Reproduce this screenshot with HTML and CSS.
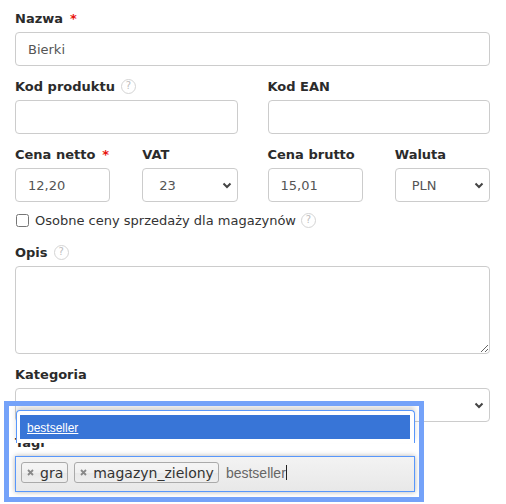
FILE: index.html
```html
<!DOCTYPE html>
<html lang="pl">
<head>
<meta charset="utf-8">
<title>Produkt</title>
<link rel="stylesheet" href="styles.css">
</head>
<body>
<form class="form">
  <div class="group">
    <label class="label">Nazwa<span class="req">*</span></label>
    <input class="input" type="text" value="Bierki">
  </div>

  <div class="row2">
    <div class="group">
      <label class="label">Kod produktu<span class="help">?</span></label>
      <input class="input" type="text">
    </div>
    <div class="group">
      <label class="label">Kod EAN</label>
      <input class="input" type="text">
    </div>
  </div>

  <div class="row2">
    <div class="row2 inner">
      <div class="group">
        <label class="label">Cena netto<span class="req">*</span></label>
        <input class="input" type="text" value="12,20">
      </div>
      <div class="group">
        <label class="label">VAT</label>
        <div class="select"><span>23</span><svg class="chev" width="10" height="7" viewBox="0 0 10 7"><path d="M1.5 1.5 L5 5 L8.5 1.5" fill="none" stroke="#444" stroke-width="2"/></svg></div>
      </div>
    </div>
    <div class="row2 inner">
      <div class="group">
        <label class="label">Cena brutto</label>
        <input class="input" type="text" value="15,01">
      </div>
      <div class="group">
        <label class="label">Waluta</label>
        <div class="select"><span>PLN</span><svg class="chev" width="10" height="7" viewBox="0 0 10 7"><path d="M1.5 1.5 L5 5 L8.5 1.5" fill="none" stroke="#444" stroke-width="2"/></svg></div>
      </div>
    </div>
  </div>

  <label class="check"><input type="checkbox" class="cb">Osobne ceny sprzedaży dla magazynów<span class="help">?</span></label>

  <div class="group">
    <label class="label">Opis<span class="help">?</span></label>
    <textarea class="textarea"></textarea>
  </div>

  <div class="group">
    <label class="label">Kategoria</label>
    <div class="select"><span></span><svg class="chev" width="10" height="7" viewBox="0 0 10 7"><path d="M1.5 1.5 L5 5 L8.5 1.5" fill="none" stroke="#444" stroke-width="2"/></svg></div>
  </div>

  <div class="group tags-group">
    <label class="label">Tagi</label>
    <div class="tags">
      <span class="chip"><svg class="x" width="7" height="7" viewBox="0 0 7 7"><path d="M1 1 L6 6 M6 1 L1 6" stroke="#888" stroke-width="1.8"/></svg>gra</span>
      <span class="chip"><svg class="x" width="7" height="7" viewBox="0 0 7 7"><path d="M1 1 L6 6 M6 1 L1 6" stroke="#888" stroke-width="1.8"/></svg>magazyn_zielony</span>
      <span class="typed">bestseller<span class="caret"></span></span>
    </div>
    <div class="dropdown">
      <div class="option"><span class="option-text">bestseller</span></div>
    </div>
    <div class="focus-frame"></div>
  </div>
</form>
</body>
</html>
```

FILE: styles.css
```css
* {
  box-sizing: border-box;
}

body {
  margin: 0;
  background: #fff;
  color: #333;
  font-family: "DejaVu Sans", Verdana, sans-serif;
}

.form {
  width: 475px;
  margin: 8px 0 0 15px;
}

.group {
  margin-bottom: 10px;
}

.label {
  display: flex;
  align-items: center;
  height: 20px;
  margin-bottom: 4px;
  font-size: 13px;
  font-weight: bold;
  color: #2b2b2b;
}

.req {
  color: #e8140e;
  margin-left: 7px;
}

.help {
  display: inline-flex;
  align-items: center;
  justify-content: center;
  width: 15px;
  height: 15px;
  margin-left: 6px;
  border: 1px solid #d4d4d4;
  border-radius: 50%;
  color: #bdbdbd;
  font-size: 10px;
  font-weight: normal;
  line-height: 1;
}

.input {
  display: block;
  width: 100%;
  height: 34px;
  padding: 0 12px;
  border: 1px solid #ccc;
  border-radius: 4px;
  background: #fff;
  color: #555;
  font-family: "DejaVu Sans", Verdana, sans-serif;
  font-size: 13px;
  outline: none;
}

.row2 {
  display: grid;
  grid-template-columns: 1fr 1fr;
  column-gap: 30px;
}

.row2.inner {
  column-gap: 32px;
}

.select {
  display: flex;
  align-items: center;
  justify-content: space-between;
  width: 100%;
  height: 34px;
  padding: 0 5px 0 16px;
  border: 1px solid #ccc;
  border-radius: 4px;
  background: #fff;
  color: #555;
  font-size: 13px;
}

.chev {
  display: block;
}

.check {
  display: flex;
  align-items: center;
  height: 20px;
  margin: -2px 0 12px;
  font-size: 13px;
  color: #333;
}

.cb {
  width: 13px;
  height: 13px;
  margin: 0 6px 0 1px;
}

.check .help {
  margin-left: 5px;
}

.textarea {
  display: block;
  width: 100%;
  height: 88px;
  border: 1px solid #ccc;
  border-radius: 4px;
  resize: vertical;
  font-family: "DejaVu Sans", Verdana, sans-serif;
  font-size: 13px;
  outline: none;
}

.tags-group {
  position: relative;
}

.tags {
  display: flex;
  align-items: flex-start;
  gap: 6px;
  width: 400px;
  height: 36px;
  padding: 5px;
  border: 1px solid #5897fb;
  background: linear-gradient(#f3f3f3, #e8e8e8);
  box-shadow: 0 0 5px rgba(0, 0, 0, 0.3);
}

.chip {
  display: flex;
  align-items: center;
  height: 21px;
  padding: 0 4px 0 5px;
  border: 1px solid #aaa;
  border-radius: 3px;
  background: linear-gradient(#f4f4f4 20%, #f0f0f0 50%, #e8e8e8 52%, #eee 100%);
  color: #333;
  font-size: 14px;
}

.x {
  display: block;
  margin-right: 6px;
}

.typed {
  display: flex;
  align-items: center;
  height: 21px;
  margin-left: 1px;
  font-family: "Liberation Sans", Arial, sans-serif;
  font-size: 14px;
  color: #666;
}

.caret {
  display: inline-block;
  width: 1px;
  height: 15px;
  background: #222;
}

.dropdown {
  position: absolute;
  top: -22px;
  left: 1px;
  z-index: 2;
  width: 399px;
  height: 33px;
  padding: 4px 4px 0 3px;
  border: 1px solid #5897fb;
  border-bottom: none;
  border-radius: 4px 4px 0 0;
  background: #fff;
  box-shadow: 0 -4px 5px rgba(0, 0, 0, 0.15);
}

.option {
  height: 24px;
  padding-left: 7px;
  background: #3875d7;
  line-height: 24px;
}

.option-text {
  color: #fff;
  font-family: "Liberation Sans", Arial, sans-serif;
  font-size: 12px;
  text-decoration: underline;
}

.focus-frame {
  position: absolute;
  top: -31px;
  left: -11px;
  z-index: 3;
  width: 420px;
  height: 101px;
  border: 5px solid #74a2f9;
  pointer-events: none;
}
```
